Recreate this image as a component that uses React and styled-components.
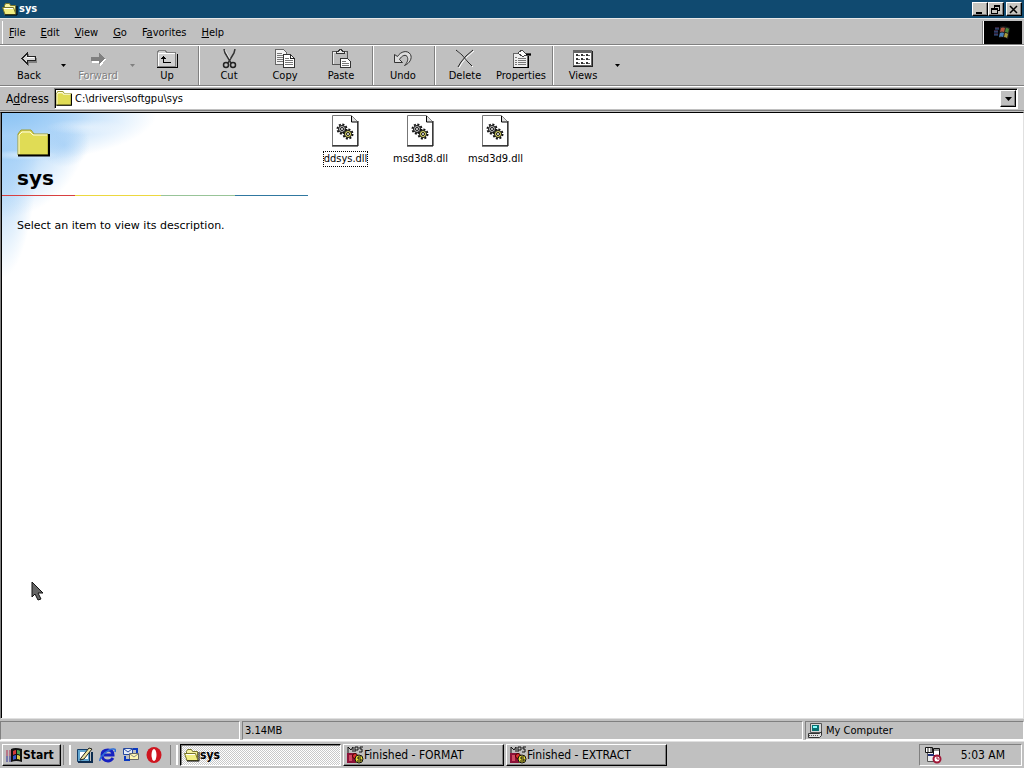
import React from 'react'
import styled, { createGlobalStyle, css } from 'styled-components'

const GlobalStyle = createGlobalStyle`
  * {
    box-sizing: border-box;
  }
  body {
    margin: 0;
    background: #c0c0c0;
    color: #000;
    font: 11px/14px 'DejaVu Sans Condensed', 'DejaVu Sans', sans-serif;
    overflow: hidden;
  }
  button,
  input {
    font: inherit;
    color: inherit;
    margin: 0;
    padding: 0;
    border: 0;
    border-radius: 0;
    background: none;
  }
  svg {
    display: block;
    flex: none;
  }
`

const tools = [
  [
    { label: 'Back', icon: 'back', menu: true },
    { label: 'Forward', icon: 'forward', menu: true, disabled: true },
    { label: 'Up', icon: 'up' },
  ],
  [
    { label: 'Cut', icon: 'cut' },
    { label: 'Copy', icon: 'copy' },
    { label: 'Paste', icon: 'paste' },
  ],
  [{ label: 'Undo', icon: 'undo' }],
  [
    { label: 'Delete', icon: 'delete' },
    { label: 'Properties', icon: 'properties' },
  ],
  [{ label: 'Views', icon: 'views', menu: true }],
]

const menus = [
  ['', 'F', 'ile'],
  ['', 'E', 'dit'],
  ['', 'V', 'iew'],
  ['', 'G', 'o'],
  ['F', 'a', 'vorites'],
  ['', 'H', 'elp'],
]

const files = ['ddsys.dll', 'msd3d8.dll', 'msd3d9.dll']

const ToolIcon = ({ name }) => (
  <svg width="22" height="20" viewBox="0 0 22 20" fill="none" stroke="#222" shapeRendering="crispEdges">
    {name === 'back' && (
      <>
        <path d="M5 10.5l6-6v4h8v5h-8v4z" fill="#808080" stroke="none" />
        <path d="M4 9.500l5-5v3h8v4h-8v3z" fill="#d8d8d8" />
        <path d="M9 8.500h7" stroke="#fff" />
      </>
    )}
    {name === 'forward' && (
      <>
        <path d="M19 10.5l-6-6v4H5v5h8v4z" fill="#fff" stroke="none" />
        <path d="M18 9.500l-6-6v4H4v4h8v4z" fill="#808080" stroke="none" />
      </>
    )}
    {name === 'up' && (
      <>
        <path d="M1.500 17.500v-14l1-2h7l1 2h9v14z" fill="#d0d0d0" stroke="#808080" />
        <path d="M2 4.500h17M2.500 5v12" stroke="#fff" />
        <path d="M1 18.500h20.500v-14" stroke="#000" />
        <path d="M7.500 8v5.500h7M5 9.500h5M6 8.500h3M7 7.500h1" stroke="#000" />
      </>
    )}
    {name === 'cut' && (
      <g shapeRendering="auto">
        <path d="M6 0l1 4 6 10M17 0l-1 4-6 10" stroke="#333" strokeWidth="1.500" />
        <path d="M7 1l5 9" stroke="#fff" strokeWidth=".6" />
        <ellipse cx="8" cy="16" rx="2.500" ry="2.500" strokeWidth="1.500" />
        <ellipse cx="15" cy="16" rx="2.500" ry="2.500" strokeWidth="1.500" />
      </g>
    )}
    {name === 'copy' && (
      <>
        <path d="M1.500.5h8l3 3v12h-11z" fill="#f4f4f4" stroke="#666" />
        <path d="M3 4.500h5M3 6.500h6M3 8.500h6M3 10.500h6M3 12.500h6" stroke="#777" />
        <path d="M9.500 5.500h7l4 4v9h-11z" fill="#fff" stroke="#333" />
        <path d="M16.500 5.500v4h4" />
        <path d="M11 9.500h4M11 11.500h8M11 13.500h8M11 15.500h8" stroke="#777" />
      </>
    )}
    {name === 'paste' && (
      <>
        <path d="M2.500 2.500h15v13h-15z" fill="#bbb" stroke="#555" />
        <path d="M3 3.500h13M3.500 4v11" stroke="#eee" />
        <path d="M6.500 4.500v-2h2l1-2h2l1 2h2v2z" fill="#e8e8e8" stroke="#333" />
        <path d="M10.500 9.500h7l3 3v6h-10z" fill="#fff" stroke="#333" />
        <path d="M12 12.500h4M12 14.500h7M12 16.500h7" stroke="#777" />
      </>
    )}
    {name === 'undo' && (
      <path
        d="M2.500 5.500v8h8l-3-3c2-4 7-6 8-2 1 3-1 6-3 8 5-2 8-7 6-11-3-5-10-3-13 2z"
        fill="#ddd"
        stroke="#333"
        shapeRendering="auto"
      />
    )}
    {name === 'delete' && (
      <g shapeRendering="auto">
        <path d="M3 2l6 5 6 7 4 4M20 2l-7 6-5 6-3 5" stroke="#fff" />
        <path d="M2 1l6 5 6 7 4 4M19 1l-7 6-5 6-3 5" />
      </g>
    )}
    {name === 'properties' && (
      <>
        <path d="M3.500 4.500h14v14h-14z" fill="#eee" stroke="#666" />
        <path d="M3 18.500h15.500V5" stroke="#000" />
        <path d="M5 8.500h2M8 9.500h8M5 11.500h2M8 11.500h8M5 13.500h2M8 13.500h8M5 15.500h2M8 15.500h8" stroke="#777" />
        <path d="M8 4l4-3 3 3h5v2h-5l-2 2z" fill="#fff" stroke="#444" />
        <path d="M16 5.500h5" stroke="#000" />
      </>
    )}
    {name === 'views' && (
      <>
        <path d="M1.500 1.500h18v15h-18z" fill="#fff" stroke="#666" />
        <path d="M2 2.500h17" stroke="#666" strokeWidth="2" />
        <path d="M1 17.500h19.500V2" stroke="#222" />
        <path d="M4 6h2M9 6h2M14 6h2M4 10h2M9 10h2M14 10h2M4 14h2M9 14h2M14 14h2" stroke="#333" strokeWidth="2" />
        <path d="M6 6.500h2M11 6.500h2M16 6.500h2M6 10.500h2M11 10.500h2M16 10.500h2M6 14.500h2M11 14.500h2M16 14.500h2" stroke="#666" />
      </>
    )}
  </svg>
)

const FolderIcon = ({ big }) => (
  <svg width={big ? 33 : 16} height={big ? 28 : 15} viewBox="0 0 33 28" preserveAspectRatio="none">
    <path d="M1 26V5l3-4h10l3 4h14v21z" fill="#e0dc55" stroke="#9c9a30" strokeWidth={big ? 1 : 2} />
    <path d="M2 25V6l3-3h8l3 3h14" fill="none" stroke="#fffce0" strokeWidth={big ? 1 : 2} />
    <path d="M1 26.500h31V5" fill="none" stroke="#000" strokeWidth="2" />
  </svg>
)

const OpenFolderIcon = () => (
  <svg width="16" height="14" viewBox="0 0 16 14">
    <path d="M2.500 12V3.500l1-2h4l1 2h5V12z" fill="#f5f2a0" stroke="#77752c" />
    <path d="M.5 5.500h11l2.500 7H3z" fill="#f1ee82" stroke="#77752c" />
    <path d="M2 6.500h9" stroke="#fff" />
    <path d="M3 13h12V4" fill="none" stroke="#000" />
  </svg>
)

const Gear = ({ x, y, fill }) => (
  <g transform={`translate(${x} ${y})`}>
    <circle r="4.500" fill="none" stroke="#111" strokeWidth="2" strokeDasharray="2 1.500" />
    <circle r="3.500" fill={fill} stroke="#111" />
    <circle r="1.500" fill="#fff" stroke="#111" />
  </g>
)

const DllIcon = () => (
  <svg width="27" height="32" viewBox="0 0 27 32">
    <path d="M.5.5h19l6 6v24H.5z" fill="#fff" stroke="#777" />
    <path d="M19.500 1v6h6" fill="#ddd" stroke="#000" />
    <path d="M0 31h26V6" fill="none" stroke="#000" />
    <Gear x={10} y={14} fill="#bbb" />
    <Gear x={16} y={19} fill="#e6e36a" />
  </svg>
)

const WindowsFlag = () => (
  <svg width="16" height="16" viewBox="0 0 16 16">
    <path d="M5 2q4-2 11 0v13q-6-2-11 0z" fill="#111" />
    <path d="M7 4q2-1 3-1v4q-1 0-3 1z" fill="#d33a3a" />
    <path d="M11 3q2 0 3 1v4q-1-1-3-1z" fill="#4a9c50" />
    <path d="M7 9q2-1 3-1v4q-1 0-3 1z" fill="#3353c8" />
    <path d="M11 8q2 0 3 1v4q-1-1-3-1z" fill="#d9c64b" />
    <path d="M0 4h2M3 4h2M0 6h2M3 6h2M0 8h2M3 8h2" stroke="#b02c4c" />
    <path d="M0 10h2M3 10h2M0 12h2M3 12h2M0 14h2M3 14h2" stroke="#2b2b90" />
  </svg>
)

const BrandFlag = () => (
  <svg width="20" height="18" viewBox="0 0 20 18">
    <path d="M7 3q4-2 10 1l-2 11q-5-3-9-1z" fill="#222" />
    <path d="M8 4q2-1 4 0l-1 4q-2-1-4 0z" fill="#b3543d" />
    <path d="M13 4q2 0 3 1l-1 4q-1-1-3-1z" fill="#498536" />
    <path d="M7 9q2-1 4 0l-1 4q-2-1-4 0z" fill="#4880b8" />
    <path d="M12 9q2 0 3 1l-1 4q-1-1-3-1z" fill="#a99c3c" />
    <path d="M2 4h4M1 7h4M1 10h4" stroke="#66406f" />
    <path d="M2 5h4M1 8h4M1 11h4" stroke="#375f9b" />
  </svg>
)

const DosIcon = () => (
  <svg width="17" height="18" viewBox="0 0 17 18">
    <path d="M1 7V1l3 3 2-3v5M8 6V1h3v3H8M16 1h-3v2h2v3h-3" fill="none" stroke="#111" />
    <path d="M0 7h9v10H0z" fill="#8c1238" />
    <path d="M2 9h3v6H2z" fill="#d04a62" />
    <circle cx="8" cy="10" r="2.500" fill="#e03030" stroke="#400" />
    <circle cx="12" cy="13" r="4" fill="#eadf35" stroke="#111" />
    <path d="M14 11h-3v2h3v2h-4" fill="none" stroke="#111" />
  </svg>
)

const DesktopIcon = () => (
  <svg width="16" height="16" viewBox="0 0 16 16">
    <path d="M.5 2.500h12v12H.5z" fill="#5fa5d0" stroke="#123c68" />
    <path d="M3 5h8v7H3z" fill="#fff" />
    <path d="M4 11l8-10 3 1-8 10-4 1z" fill="#eee6a0" stroke="#222" />
    <path d="M1 15h14V5" fill="none" stroke="#0d2c50" strokeWidth="2" />
  </svg>
)

const ExplorerIcon = () => (
  <svg width="17" height="16" viewBox="0 0 17 16" fill="none">
    <path d="M14 11q-2 3-5 3c-4 0-6-3-6-6s2-5 6-5 5 2 5 5H5" stroke="#1620c0" strokeWidth="3" />
    <path d="M1 14C0 10 10 1 15 2q2 0 1 3" stroke="#2a6ad8" strokeWidth="1.500" />
  </svg>
)

const MailIcon = () => (
  <svg width="16" height="16" viewBox="0 0 16 16">
    <path d="M.5 1.500h9v6h-9z" fill="#e6edf8" stroke="#2648a0" />
    <path d="M1 2l4 3 4-3" fill="none" stroke="#2648a0" />
    <path d="M10 2h4v4" fill="none" stroke="#0a38c0" strokeWidth="2" />
    <path d="M6.500 6.500h9v6h-9z" fill="#fff6b0" stroke="#666" />
    <path d="M7 7l4 3 4-3" fill="none" stroke="#888" />
    <path d="M2 9v4h5" fill="none" stroke="#0a38c0" strokeWidth="2" />
  </svg>
)

const OperaIcon = () => (
  <svg width="16" height="16" viewBox="0 0 16 16">
    <ellipse cx="8" cy="8" rx="7.500" ry="8" fill="#cf1620" />
    <ellipse cx="8" cy="8" rx="2.500" ry="6" fill="#fff" />
  </svg>
)

const ComputerIcon = () => (
  <svg width="15" height="15" viewBox="0 0 15 15">
    <path d="M2.500.5h11v9h-11z" fill="#d8d8d8" stroke="#555" />
    <path d="M4 2h7v6H4z" fill="#087070" />
    <path d="M5 3h4v2H5z" fill="#8ff" />
    <path d="M.5 10.500h11l2-2v4l-2 2H.5z" fill="#e0e0e0" stroke="#333" />
    <path d="M1 12.500h10" stroke="#555" strokeDasharray="1 1" />
  </svg>
)

const SchedulerIcon = () => (
  <svg width="17" height="17" viewBox="0 0 17 17">
    <path d="M2.500 5.500h8v9h-8z" fill="#eee" stroke="#555" />
    <path d="M.5.5h7v5h-7zM8.500 1.500h6v7h-6z" fill="#fff" stroke="#111" />
    <path d="M2 2h2M5 2h2M2 4h2M5 4h2M9 3h5" stroke="#222" />
    <path d="M3 8h6" stroke="#203078" strokeWidth="2" />
    <circle cx="12" cy="12" r="3.500" fill="#fff" stroke="#a01838" strokeWidth="2" />
    <path d="M12 9v3h2" fill="none" stroke="#a01838" />
  </svg>
)

const Caret = ({ color = '#000', wide }) => (
  <svg width={wide ? 7 : 5} height={wide ? 4 : 3} viewBox="0 0 7 4">
    <path d="M0 0h7L3.500 4z" fill={color} />
  </svg>
)

const Cursor = () => (
  <svg width="13" height="21" viewBox="0 0 13 21">
    <path d="M1 1v15l3-3 3 6 3-1-3-6h5z" fill="#666" stroke="#111" />
  </svg>
)

const App = () => {
  return (
    <Screen>
      <GlobalStyle />
      <TitleBar>
        <OpenFolderIcon />
        <Title>sys</Title>
        <CaptionButton aria-label="Minimize">
          <svg width="10" height="9"><path d="M1 7h6v2H1z" /></svg>
        </CaptionButton>
        <CaptionButton aria-label="Restore">
          <svg width="10" height="9" fill="none" stroke="#000" shapeRendering="crispEdges">
            <path d="M3.500 3V.5h5v5H7M3 1.500h6M.5 3.500h6v5h-6zM0 4.500h7" />
          </svg>
        </CaptionButton>
        <CaptionButton aria-label="Close" $apart>
          <svg width="10" height="9"><path d="M1 1l7 7M8 1L1 8" stroke="#000" strokeWidth="1.500" /></svg>
        </CaptionButton>
      </TitleBar>
      <MenuRow>
        <MenuBar>
          {menus.map(([before, key, after]) => (
            <MenuItem key={before + key + after}>
              {before}<u>{key}</u>{after}
            </MenuItem>
          ))}
        </MenuBar>
        <Brand><BrandFlag /></Brand>
      </MenuRow>
      <ToolBar>
        {tools.map((group) => (
          <ToolGroup key={group[0].label}>
            {group.map((tool) => (
              <React.Fragment key={tool.label}>
                <ToolButton disabled={tool.disabled}>
                  <ToolIcon name={tool.icon} />
                  {tool.label}
                </ToolButton>
                {tool.menu && (
                  <ToolMenu aria-label={`${tool.label} menu`} disabled={tool.disabled}>
                    <Caret color={tool.disabled ? '#808080' : '#000'} />
                  </ToolMenu>
                )}
              </React.Fragment>
            ))}
          </ToolGroup>
        ))}
      </ToolBar>
      <AddressBar>
        <AddressLabel htmlFor="address">A<u>d</u>dress</AddressLabel>
        <AddressBox>
          <FolderIcon />
          <AddressInput id="address" defaultValue="C:\drivers\softgpu\sys" spellCheck={false} />
          <DropButton aria-label="Show addresses"><Caret wide /></DropButton>
        </AddressBox>
      </AddressBar>
      <Content>
        <InfoPanel>
          <InfoHead>
            <FolderIcon big />
            <FolderName>sys</FolderName>
          </InfoHead>
          <Rainbow />
          <Hint>Select an item to view its description.</Hint>
        </InfoPanel>
        <FileList>
          {files.map((file, i) => (
            <File key={file}>
              <DllIcon />
              <FileName $focused={i === 0}>{file}</FileName>
            </File>
          ))}
        </FileList>
      </Content>
      <StatusBar>
        <StatusPane $width="240px" />
        <StatusPane $grow>3.14MB</StatusPane>
        <StatusPane $width="219px"><ComputerIcon />My Computer</StatusPane>
      </StatusBar>
      <TaskBar>
        <StartButton><WindowsFlag />Start</StartButton>
        <Grip />
        <QuickLaunch>
          <QuickButton aria-label="Show Desktop"><DesktopIcon /></QuickButton>
          <QuickButton aria-label="Internet Explorer"><ExplorerIcon /></QuickButton>
          <QuickButton aria-label="Outlook Express"><MailIcon /></QuickButton>
          <QuickButton aria-label="Opera"><OperaIcon /></QuickButton>
        </QuickLaunch>
        <Grip />
        <Tasks>
          <TaskButton $active><OpenFolderIcon />sys</TaskButton>
          <TaskButton><DosIcon />Finished - FORMAT</TaskButton>
          <TaskButton><DosIcon />Finished - EXTRACT</TaskButton>
        </Tasks>
        <Tray>
          <SchedulerIcon />
          <span>5:03 AM</span>
        </Tray>
      </TaskBar>
      <Pointer><Cursor /></Pointer>
    </Screen>
  )
}

const raised = css`
  border: 1px solid;
  border-color: #fff #000 #000 #fff;
  box-shadow: inset -1px -1px #808080;
`

const Screen = styled.div`
  position: relative;
  display: flex;
  flex-direction: column;
  min-height: 100vh;
`

const TitleBar = styled.header`
  display: flex;
  align-items: center;
  height: 18px;
  padding: 0 2px;
  background: #104a70;
`

const Title = styled.h1`
  flex: 1;
  margin: 0;
  padding-left: 1px;
  color: #fff;
  font-size: 11px;
`

const CaptionButton = styled.button`
  ${raised}
  display: flex;
  align-items: center;
  justify-content: center;
  width: 16px;
  height: 14px;
  margin-left: ${({ $apart }) => ($apart ? '2px' : '0')};
  background: #c8c6c0;
`

const MenuRow = styled.div`
  display: flex;
  height: 27px;
  padding: 2px 2px 0 2px;
  border-top: 1px solid #e8e8e8;
  border-bottom: 1px solid #808080;
`

const MenuBar = styled.nav`
  display: flex;
  flex: 1;
  align-items: center;
  border-left: 1px solid #fff;
  border-right: 1px solid #808080;
`

const MenuItem = styled.button`
  padding: 0 9px 0 6px;
`

const Brand = styled.div`
  display: flex;
  align-items: center;
  justify-content: center;
  width: 39px;
  border-left: 1px solid #fff;
  background: #000;
`

const ToolBar = styled.div`
  display: flex;
  height: 41px;
  padding-left: 1px;
  border-top: 1px solid #fff;
  border-bottom: 1px solid #808080;
`

const ToolGroup = styled.div`
  display: flex;
  & + & {
    padding-left: 2px;
    margin-left: 3px;
    border-left: 1px solid #808080;
    box-shadow: inset 1px 0 #fff;
  }
`

const ToolButton = styled.button`
  display: flex;
  flex-direction: column;
  align-items: center;
  width: 56px;
  padding-top: 3px;
  &:disabled {
    color: #808080;
    text-shadow: 1px 1px #fff;
  }
`

const ToolMenu = styled.button`
  display: flex;
  align-items: center;
  justify-content: center;
  width: 13px;
`

const AddressBar = styled.div`
  display: flex;
  align-items: center;
  height: 25px;
  padding: 0 6px;
  border-top: 1px solid #fff;
  border-bottom: 1px solid #808080;
`

const AddressLabel = styled.label`
  width: 48px;
  font-size: 12px;
`

const AddressBox = styled.div`
  display: flex;
  align-items: center;
  flex: 1;
  height: 21px;
  padding: 0 1px;
  border: 1px solid;
  border-color: #808080 #fff #fff #808080;
  box-shadow: inset 1px 1px #000;
  background: #fff;
`

const AddressInput = styled.input`
  flex: 1;
  min-width: 0;
  padding-left: 3px;
  outline: 0;
`

const DropButton = styled.button`
  ${raised}
  display: flex;
  align-items: center;
  justify-content: center;
  width: 16px;
  height: 17px;
  background: #c0c0c0;
`

const Content = styled.main`
  display: flex;
  flex: 1;
  border: 1px solid;
  border-color: #000 #e0e0e0 #e0e0e0 #808080;
  box-shadow: inset 1px 0 #000;
  margin-top: 1px;
  padding: 0 0 0 1px;
  background: #fff;
`

/* sky in the corner: three overlapping patches of blue with a streak of cloud */
const InfoPanel = styled.aside`
  width: 306px;
  background:
    radial-gradient(ellipse 34px 5px at 22px 42px, #ffffff88, #ffffff00),
    radial-gradient(ellipse 40px 8px at 84px 14px, #ffffff66, #ffffff00),
    radial-gradient(ellipse 26px 22px at 62px 32px, #94c6f488, #94c6f400),
    radial-gradient(ellipse 155px 50px at 0 0, #8cc4f4, #a8d2f8cc 45%, #d4eafc00),
    radial-gradient(ellipse 90px 105px at 0 0, #8cc4f4, #a8d2f8cc 50%, #d4eafc00),
    radial-gradient(ellipse 38px 165px at 0 0, #9cccf6, #b4d8f8cc 50%, #d4eafc00),
    #fff;
`

const InfoHead = styled.div`
  padding: 16px 15px 5px;
`

const FolderName = styled.h2`
  margin: 9px 0 0;
  font: bold 20px/24px 'DejaVu Sans', sans-serif;
`

const Rainbow = styled.div`
  height: 1px;
  background: linear-gradient(90deg, #d84040 24%, #ecd840 24% 52%, #98c498 52% 76%, #3078a0 76%);
`

const Hint = styled.p`
  margin: 23px 15px;
  font-family: 'DejaVu Sans', sans-serif;
`

const FileList = styled.div`
  display: flex;
  flex: 1;
  flex-wrap: wrap;
  align-content: flex-start;
  padding-top: 2px;
`

const File = styled.button`
  display: flex;
  flex-direction: column;
  align-items: center;
  gap: 4px;
  width: 75px;
`

const FileName = styled.span`
  border: 1px dotted ${({ $focused }) => ($focused ? '#000' : 'transparent')};
`

const StatusBar = styled.footer`
  display: flex;
  gap: 2px;
  height: 22px;
  padding-top: 2px;
  border-bottom: 1px solid #fff;
`

const StatusPane = styled.div`
  display: flex;
  align-items: center;
  flex: ${({ $grow }) => ($grow ? '1' : 'none')};
  gap: 3px;
  width: ${({ $width }) => $width || 'auto'};
  padding: 0 2px;
  border: 1px solid;
  border-color: #808080 #fff #fff #808080;
`

const TaskBar = styled.footer`
  display: flex;
  align-items: center;
  height: 27px;
  padding: 0 2px;
  border-top: 1px solid #e0e0e0;
  font-size: 12px;
`

const StartButton = styled.button`
  ${raised}
  display: flex;
  align-items: center;
  gap: 1px;
  width: 59px;
  height: 22px;
  padding-left: 3px;
  font-size: 12px;
  font-weight: bold;
`

const Grip = styled.div`
  width: 8px;
  height: 20px;
  margin: 0 2px;
  border: solid;
  border-width: 0 2px 0 1px;
  border-color: #fff #fff #fff #808080;
`

const QuickLaunch = styled.div`
  display: flex;
  width: 95px;
`

const QuickButton = styled.button`
  display: flex;
  justify-content: center;
  width: 23px;
`

const Tasks = styled.div`
  display: flex;
  flex: 1;
  gap: 2px;
`

const TaskButton = styled.button`
  ${raised}
  display: flex;
  align-items: center;
  width: 161px;
  height: 22px;
  padding: 0 3px;
  ${({ $active }) =>
    $active &&
    css`
      border-color: #000 #fff #fff #000;
      box-shadow: inset 1px 1px #808080;
      background: repeating-conic-gradient(#fff 0 25%, #c8c8c8 0 50%) 0 0 / 2px 2px;
      font-weight: bold;
    `}
`

const Tray = styled.div`
  display: flex;
  align-items: center;
  justify-content: space-between;
  width: 103px;
  height: 22px;
  padding: 0 16px 0 5px;
  border: 1px solid;
  border-color: #808080 #fff #fff #808080;
`

/* mouse pointer, floats over the window */
const Pointer = styled.div`
  position: absolute;
  left: 31px;
  top: 581px;
  pointer-events: none;
`

export default App
